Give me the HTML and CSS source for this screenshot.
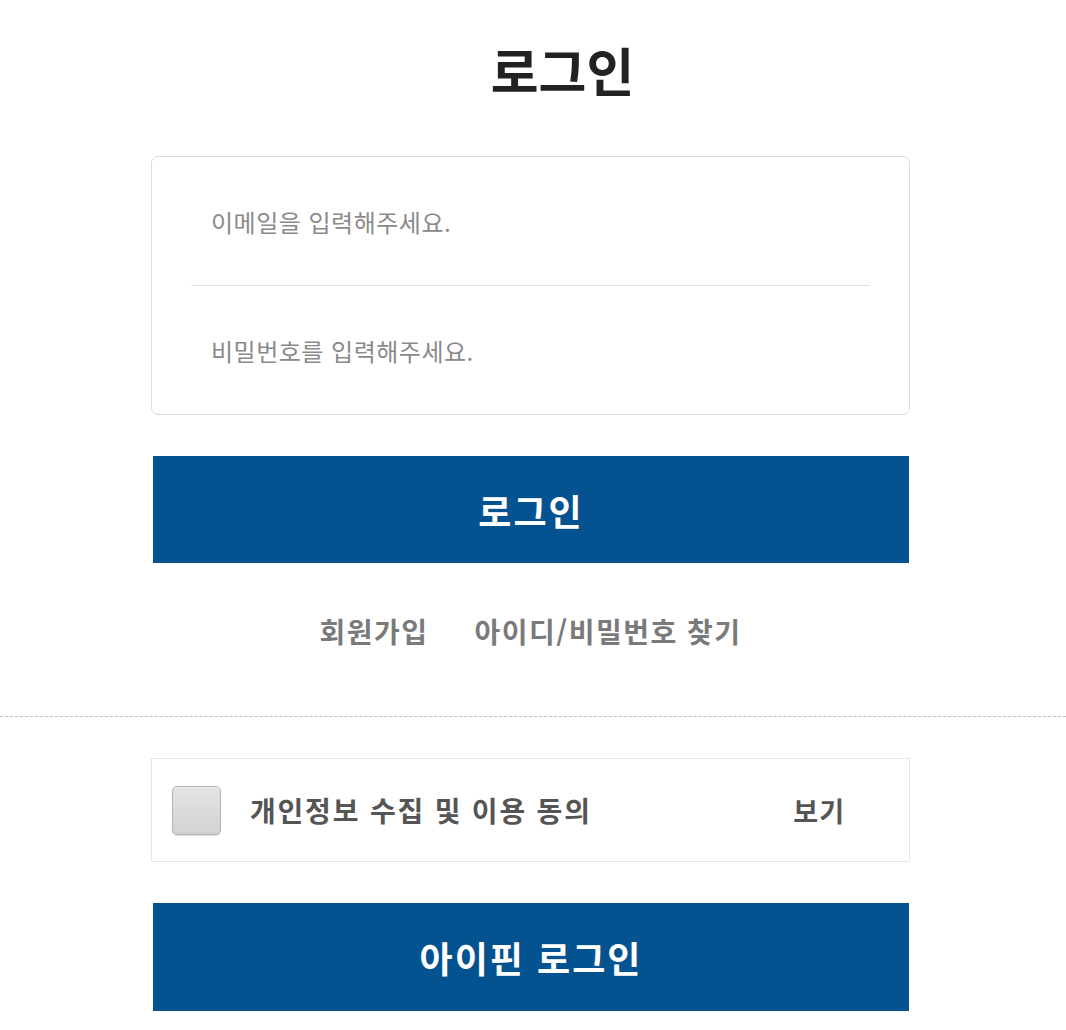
FILE: index.html
```html
<!DOCTYPE html>
<html lang="ko">
<head>
<meta charset="utf-8">
<title>로그인</title>
<link rel="stylesheet" href="styles.css">
</head>
<body>
<main class="page">
  <div class="wrap">
    <h1 class="title">로그인</h1>
    <form class="card">
      <div class="field"><span class="placeholder">이메일을 입력해주세요.</span></div>
      <div class="divider"></div>
      <div class="field"><span class="placeholder">비밀번호를 입력해주세요.</span></div>
    </form>
    <button class="btn" type="button">로그인</button>
    <nav class="links">
      <a class="link">회원가입</a>
      <a class="link">아이디/비밀번호 찾기</a>
    </nav>
  </div>
  <hr class="dash">
  <div class="wrap">
    <div class="agree">
      <span class="check"></span>
      <span class="agree-text">개인정보 수집 및 이용 동의</span>
      <a class="view">보기</a>
    </div>
    <button class="btn btn-ipin" type="button">아이핀 로그인</button>
  </div>
</main>
</body>
</html>
```

FILE: styles.css
```css
* { box-sizing: border-box; }
html, body { margin: 0; padding: 0; background: #fff; }
body {
  font-family: "Noto Sans CJK KR", "Noto Sans", sans-serif;
  color: #333;
}
.page { padding-top: 30px; }
.wrap {
  width: 759px;
  margin-left: 151px;
}
.title {
  margin: 0;
  padding-left: 64px;
  text-align: center;
  font-size: 52px;
  line-height: 80px;
  font-weight: 700;
  color: #222;
}
.card {
  margin: 46px 0 0;
  border: 1px solid #dcdcdc;
  border-radius: 7px;
  padding: 0 39px;
}
.field {
  height: 128px;
  display: flex;
  align-items: center;
  padding-left: 20px;
}
.placeholder {
  font-size: 24px;
  color: #8a8a8a;
  letter-spacing: 0.5px;
}
.divider { height: 1px; background: #e2e2e2; }
.btn {
  display: block;
  width: 756px;
  margin: 41px 2px 0 2px;
  height: 107px;
  border: 0;
  background: #04528f;
  color: #fff;
  font-family: inherit;
  font-size: 36px;
  font-weight: 700;
  letter-spacing: 2px;
  cursor: pointer;
}
.links {
  display: flex;
  justify-content: center;
  gap: 46px;
  margin-top: 48px;
  height: 40px;
  align-items: center;
}
.link {
  font-size: 28px;
  font-weight: 700;
  color: #7a7a7a;
  letter-spacing: 1.5px;
}
.dash {
  margin: 65px 0 0;
  border: 0;
  border-top: 1px dashed #bdbdbd;
  height: 0;
}
.agree {
  margin-top: 41px;
  height: 104px;
  border: 1px solid #e6e6e6;
  display: flex;
  align-items: center;
  padding: 0 64px 0 20px;
}
.check {
  width: 49px;
  height: 49px;
  border: 1px solid #b5b5b5;
  border-radius: 5px;
  background: linear-gradient(#e4e4e4, #d2d2d2);
  box-shadow: inset 0 1px 0 #f0f0f0, 0 1px 1px rgba(0,0,0,0.15);
  flex: none;
}
.agree-text {
  margin-left: 29px;
  font-size: 28px;
  font-weight: 700;
  color: #555;
  letter-spacing: 1.8px;
  flex: 1;
}
.view {
  font-size: 27px;
  font-weight: 700;
  color: #555;
  letter-spacing: 1px;
}
.btn-ipin { margin-top: 41px; height: 108px; }
```
